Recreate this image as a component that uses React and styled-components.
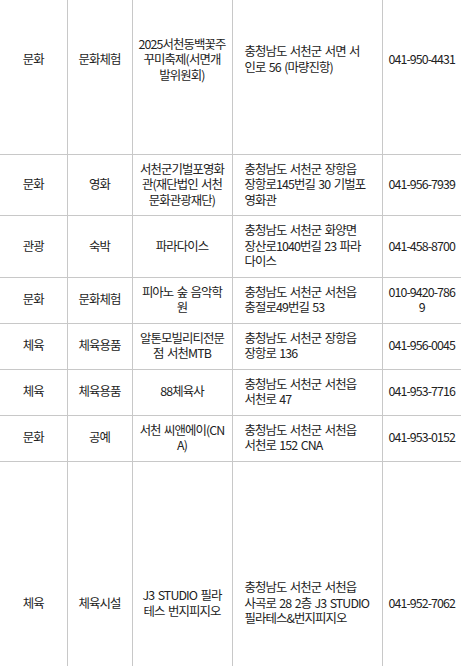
import React from 'react';
import styled, { createGlobalStyle } from 'styled-components';

const GlobalStyle = createGlobalStyle`
	html, body {
		margin: 0;
		padding: 0;
		background: #fff;
		overflow: hidden;
	}
	body {
		font-family: 'Noto Sans CJK KR', sans-serif;
	}
`;

const rows = [
	{ cat: '문화', type: '문화체험', name: '2025서천동백꽃주꾸미축제(서면개발위원회)', addr: '충청남도 서천군 서면 서인로 56 (마량진항)', tel: '041-950-4431', h: 188 },
	{ cat: '문화', type: '영화', name: '서천군기벌포영화관(재단법인 서천문화관광재단)', addr: '충청남도 서천군 장항읍 장항로145번길 30 기벌포영화관', tel: '041-956-7939' },
	{ cat: '관광', type: '숙박', name: '파라다이스', addr: '충청남도 서천군 화양면 장산로1040번길 23 파라다이스', tel: '041-458-8700' },
	{ cat: '문화', type: '문화체험', name: '피아노 숲 음악학원', addr: '충청남도 서천군 서천읍 충절로49번길 53', tel: '010-9420-7869' },
	{ cat: '체육', type: '체육용품', name: '알톤모빌리티전문점 서천MTB', addr: '충청남도 서천군 장항읍 장항로 136', tel: '041-956-0045' },
	{ cat: '체육', type: '체육용품', name: '88체육사', addr: '충청남도 서천군 서천읍 서천로 47', tel: '041-953-7716' },
	{ cat: '문화', type: '공예', name: '서천 씨앤에이(CNA)', addr: '충청남도 서천군 서천읍 서천로 152 CNA', tel: '041-953-0152' },
	{ cat: '체육', type: '체육시설', name: 'J3 STUDIO 필라테스 번지피지오', addr: '충청남도 서천군 서천읍 사곡로 28 2층 J3 STUDIO 필라테스&번지피지오', tel: '041-952-7062', h: 285 },
];

const App = () => (
	<>
		<GlobalStyle />
		<Viewport>
			<Table>
				<colgroup>
					<Col $w={67} />
					<Col $w={65} />
					<Col $w={100} />
					<Col $w={150} />
					<Col $w={79} />
				</colgroup>
				<tbody>
					{rows.map((r, i) => (
						<Row key={i} $h={r.h}>
							<Cell>{r.cat}</Cell>
							<Cell>{r.type}</Cell>
							<Cell $pad={6}>{r.name}</Cell>
							<Cell $left $pad={12}>{r.addr}</Cell>
							<Cell $pad={5}>{r.tel}</Cell>
						</Row>
					))}
				</tbody>
			</Table>
		</Viewport>
	</>
);

export default App;

const Viewport = styled.div`
	width: 461px;
	height: 666px;
	overflow: hidden;
`;

const Table = styled.table`
	margin-top: -34px;
	width: 461px;
	table-layout: fixed;
	border-collapse: collapse;
	border-spacing: 0;
	color: #222;
	font-size: 12.4px;
	line-height: 15.5px;
	letter-spacing: -0.9px;
	word-spacing: 1.5px;
`;

const Col = styled.col`
	width: ${(p) => p.$w}px;
`;

const Row = styled.tr`
	height: ${(p) => (p.$h ? `${p.$h}px` : 'auto')};
`;

const Cell = styled.td`
	padding: 7px ${(p) => p.$pad ?? 4}px;
	border-right: 1px solid #c8c8c8;
	border-bottom: 1px solid #c8c8c8;
	text-align: ${(p) => (p.$left ? 'left' : 'center')};
	vertical-align: middle;
	word-break: break-all;

	&:last-child {
		border-right: none;
	}
`;
